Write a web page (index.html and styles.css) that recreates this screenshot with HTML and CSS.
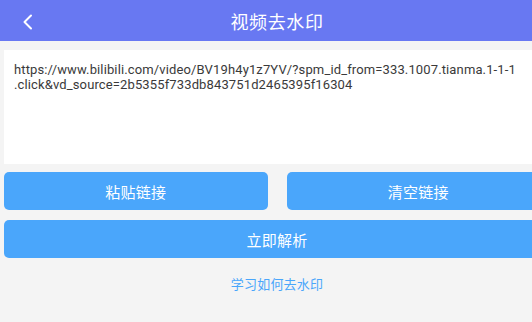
FILE: index.html
```html
<!DOCTYPE html>
<html>
<head>
    <meta charset="utf-8">
    <title>视频去水印</title>
    <link rel="stylesheet" href="styles.css">
</head>
<body>
    <div class="page">
        <div class="header">
            <span class="back">
                <svg width="12" height="16" viewBox="0 0 12 16">
                    <path d="M9 1.5 L2.5 8 L9 14.5" fill="none" stroke="#fff" stroke-width="2" stroke-linecap="round" stroke-linejoin="round"/>
                </svg>
            </span>
            <h1>视频去水印</h1>
        </div>

        <div class="link-box">https://www.bilibili.com/video/BV19h4y1z7YV/?spm_id_from=333.1007.tianma.1-1-1<br>.click&amp;vd_source=2b5355f733db843751d2465395f16304</div>

        <div class="btn-row">
            <button class="btn">粘贴链接</button>
            <button class="btn">清空链接</button>
        </div>
        <button class="btn btn-wide">立即解析</button>

        <a class="help" href="#">学习如何去水印</a>
    </div>
</body>
</html>
```

FILE: styles.css
```css
* {
    margin: 0;
    padding: 0;
    box-sizing: border-box;
    font-family: 'Roboto', 'Noto Sans CJK SC', sans-serif;
}

body {
    background: #f4f4f4;
    overflow: hidden;
}

.page {
    width: 554px;
}

.header {
    position: relative;
    height: 41px;
    background: #6878f2;
    display: flex;
    align-items: center;
    justify-content: center;
}

.back {
    position: absolute;
    left: 22px;
    top: 14px;
    display: flex;
}

.header h1 {
    color: #fff;
    font-size: 18px;
    font-weight: normal;
    letter-spacing: 0.6px;
}

.link-box {
    margin: 9px 4px 0;
    height: 114px;
    background: #fff;
    padding: 12px 10px;
    font-size: 13px;
    line-height: 15px;
    color: #3a3a3a;
    letter-spacing: 0.13px;
    white-space: nowrap;
}

.btn-row {
    display: flex;
    gap: 19px;
    margin: 8px 4px 0;
}

.btn {
    flex: 1;
    height: 38px;
    border: none;
    border-radius: 5px;
    background: #4aa6fb;
    color: #fff;
    font-size: 15px;
    letter-spacing: 0.3px;
}

.btn-wide {
    display: block;
    width: 546px;
    margin: 10px 4px 0;
}

.help {
    display: block;
    margin-top: 16px;
    text-align: center;
    font-size: 13px;
    color: #4aa6fb;
    text-decoration: none;
    letter-spacing: 0.2px;
}
```
